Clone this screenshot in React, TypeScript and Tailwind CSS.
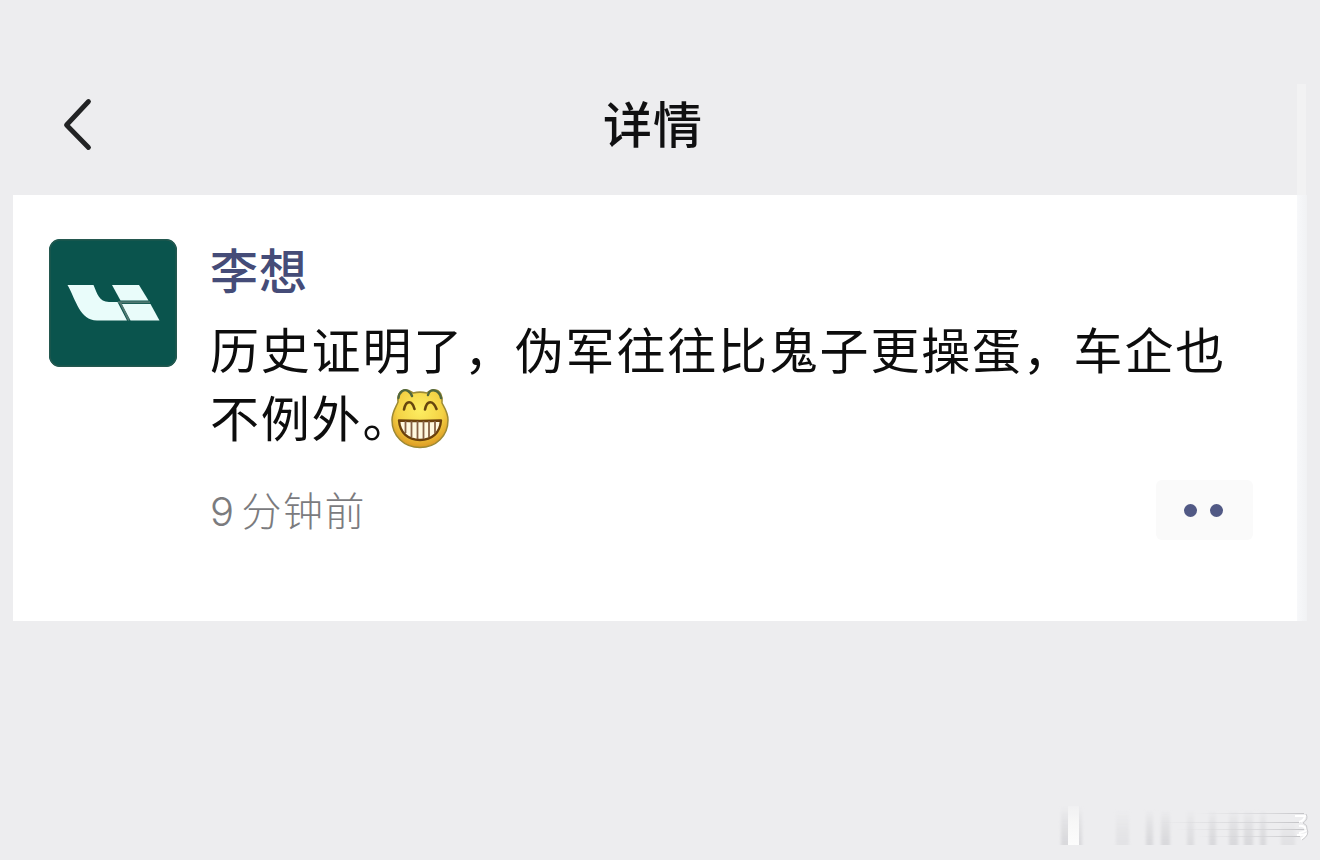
import type { ReactNode } from 'react';

function BackIcon() {
  return (
    <svg width="32" height="54" viewBox="0 0 32 54" fill="none" aria-hidden="true">
      <path
        d="M27.5 4.5 L5.5 28 L27.5 50.5"
        stroke="#222324"
        strokeWidth="4.8"
        strokeLinecap="round"
        strokeLinejoin="round"
      />
    </svg>
  );
}

function Avatar() {
  return (
    <div className="h-32 w-32 shrink-0 overflow-hidden rounded-[11px] bg-[#0a544d]">
      <svg width="128" height="128" viewBox="0 0 128 128" aria-hidden="true">
        <rect x="0.75" y="0.75" width="126.5" height="126.5" rx="10.5" fill="none" stroke="#24584f" strokeWidth="1.5" />
        <path
          d="M18.5 46 H44.5 C48 54 50 63 60 63 H68.5 L78 81.5 H48 C31 81.5 27 61 18.5 46 Z"
          fill="#e9fcfa"
        />
        <path d="M63 46 H90 L99.5 61.5 H71.5 Z" fill="#e9fcfa" />
        <path d="M72.5 65 H101.5 L110.5 81.5 H81.5 Z" fill="#e9fcfa" />
        <path d="M69 63.2 H101 M71 63.2 L80 81.5" stroke="#4f7770" strokeWidth="2" fill="none" />
      </svg>
    </div>
  );
}

function GrinEmoji() {
  return (
    <svg className="mt-[5px] shrink-0" width="60" height="62" viewBox="0 0 60 62" aria-hidden="true">
      <defs>
        <radialGradient id="face" cx="0.5" cy="0.35" r="0.68">
          <stop offset="0" stopColor="#fdee62" />
          <stop offset="0.6" stopColor="#f4d244" />
          <stop offset="1" stopColor="#d9921f" />
        </radialGradient>
      </defs>
      <path
        d="M8 14 C7 7 10 2 16 2 C20 2 21 4 23 5 C27 4 33 4 37 5 C39 3 41 2 45 2 C50 2 53 8 52 15 C54 19 58 24 58 32 C58 48 46 59.5 30 59.5 C14 59.5 2 48 2 32 C2 24 6 19 8 14 Z"
        fill="url(#face)"
        stroke="#9c8a35"
        strokeWidth="1.5"
      />
      <path
        d="M8.5 10 C9 4 14 0.5 18 3 Q21 5 22 8 M38 7 C39 3 42 1 46 3 Q50 5 51 10"
        fill="none"
        stroke="#52683d"
        strokeWidth="2.4"
        strokeLinecap="round"
      />
      <path
        d="M14 21.5 C16 12 22 12 24.5 21 M35 21.5 C37 12 43 12 46.5 21"
        fill="none"
        stroke="#66460e"
        strokeWidth="2.6"
        strokeLinecap="round"
      />
      <path
        d="M9 32.5 Q30 33.5 51 32.5 C50 45 42 52 30 52 C18 52 10 45 9 32.5 Z"
        fill="#fff8df"
        stroke="#6b400c"
        strokeWidth="2.4"
        strokeLinejoin="round"
      />
      <path d="M15.5 33 V45 M21.5 33 V49 M27.5 33 V51 M33.5 33 V51 M39 33 V49 M45 33 V45" stroke="#866044" strokeWidth="1.8" />
    </svg>
  );
}

function Watermark() {
  return (
    <svg className="block" width="256" height="48" viewBox="0 0 256 48" aria-hidden="true">
      <defs>
        <linearGradient id="streak" x1="0" y1="0" x2="0" y2="1">
          <stop offset="0" stopColor="#d6d6d9" stopOpacity="0" />
          <stop offset="0.5" stopColor="#d8d8db" stopOpacity="0.6" />
          <stop offset="1" stopColor="#d8d8db" />
        </linearGradient>
        <linearGradient id="bar" x1="0" y1="0" x2="0" y2="1">
          <stop offset="0" stopColor="#ffffff" stopOpacity="0.2" />
          <stop offset="0.4" stopColor="#f7f7f7" />
          <stop offset="1" stopColor="#fcfcfc" />
        </linearGradient>
        <linearGradient id="line" x1="0" y1="0" x2="1" y2="0">
          <stop offset="0" stopColor="#cfcfd2" stopOpacity="0" />
          <stop offset="0.7" stopColor="#d3d3d6" stopOpacity="0.8" />
          <stop offset="1" stopColor="#c4c4c7" />
        </linearGradient>
        <filter id="soft">
          <feGaussianBlur stdDeviation="1.8 0.5" />
        </filter>
      </defs>
      <g filter="url(#soft)">
        <rect x="5" y="7" width="21" height="39" fill="url(#streak)" />
        <rect x="60" y="10" width="13" height="36" fill="url(#streak)" opacity="0.5" />
        <rect x="90" y="10" width="7" height="36" fill="url(#streak)" />
        <rect x="105" y="10" width="9" height="36" fill="url(#streak)" />
        <rect x="131" y="10" width="7" height="36" fill="url(#streak)" opacity="0.8" />
        <rect x="153" y="10" width="7" height="36" fill="url(#streak)" />
        <rect x="173" y="10" width="9" height="36" fill="url(#streak)" />
        <rect x="188" y="10" width="9" height="36" fill="url(#streak)" />
        <rect x="204" y="10" width="6" height="36" fill="url(#streak)" />
        <rect x="225" y="22" width="14" height="24" fill="url(#streak)" opacity="0.6" />
      </g>
      <rect x="12" y="7" width="11" height="39" fill="url(#bar)" />
      <rect x="140" y="14" width="108" height="1" fill="url(#line)" />
      <rect x="100" y="23" width="145" height="1" fill="url(#line)" />
      <rect x="120" y="30" width="128" height="1" fill="url(#line)" />
      <rect x="140" y="37" width="104" height="1" fill="url(#line)" />
      <path
        d="M239 17 H249 Q248 22 243 23 M243 27 Q248 26 250 30 M243 34 Q248 33 251 31 M241 36 Q248 36 250 35 Q249 38 245 40"
        fill="none"
        stroke="#ffffff"
        strokeWidth="2"
      />
      <path d="M250 15 Q253 20 247 24 Q252 26 251 30 Q254 36 246 41" fill="none" stroke="#cacacd" strokeWidth="1" />
    </svg>
  );
}

function PostLine({ children }: { children: ReactNode }) {
  return <div className="flex h-[68px] items-center whitespace-nowrap">{children}</div>;
}

export default function App() {
  return (
    <div
      lang="zh-CN"
      className="flex h-[860px] w-[1320px] flex-col overflow-hidden bg-[#ededef] font-['Noto_Sans_CJK_SC',sans-serif]"
    >
      <header className="grid h-[195px] shrink-0 grid-cols-[1fr_auto_1fr] pt-[84px]">
        <button className="mt-[13px] ml-[61px] h-[54px] w-8" aria-label="返回">
          <BackIcon />
        </button>
        <h1 className="mr-[14px] h-[76px] text-[49px] leading-[76px] font-medium tracking-[1px] text-[#101011]">
          详情
        </h1>
        <div className="flex justify-end pr-[14px]">
          <div className="h-[111px] w-[9px] bg-[#f2f2f3]" />
        </div>
      </header>

      <div className="flex h-[426px] shrink-0 pl-[13px]">
        <main className="flex w-[1284px] gap-[33px] bg-white pt-11 pl-9">
          <Avatar />
          <div className="flex w-[1043px] flex-col">
            <div className="h-[58px] text-[48px] leading-[58px] font-medium tracking-[1px] text-[#454c78]">
              李想
            </div>
            <div className="mt-[17px] text-[49px] tracking-[1.8px] text-[#0d0d0d]">
              <PostLine>历史证明了，伪军往往比鬼子更操蛋，车企也</PostLine>
              <PostLine>
                <span className="w-[180px]">不例外。</span>
                <GrinEmoji />
              </PostLine>
            </div>
            <div className="mt-[30px] flex h-[60px] items-center justify-between">
              <span className="flex gap-[6px] text-[40px] font-light tracking-[1.5px] text-[#7b7b7e]">
                <span className="pt-[3px] font-['Inter','Noto_Sans_CJK_SC',sans-serif]">9</span>
                <span>分钟前</span>
              </span>
              <button
                className="flex h-[60px] w-[97px] items-center justify-center gap-[13px] rounded-[6px] bg-[#fafafa] pr-[3px]"
                aria-label="更多"
              >
                <span className="h-[13px] w-[13px] rounded-full bg-[#515985]" />
                <span className="h-[13px] w-[13px] rounded-full bg-[#515985]" />
              </button>
            </div>
          </div>
        </main>
        <div className="w-[10px] bg-linear-to-r from-[#f7f8fa] to-[#f1f2f4]" />
      </div>

      <footer className="flex flex-1 items-end justify-end pr-2 pb-[13px]">
        <Watermark />
      </footer>
    </div>
  );
}
